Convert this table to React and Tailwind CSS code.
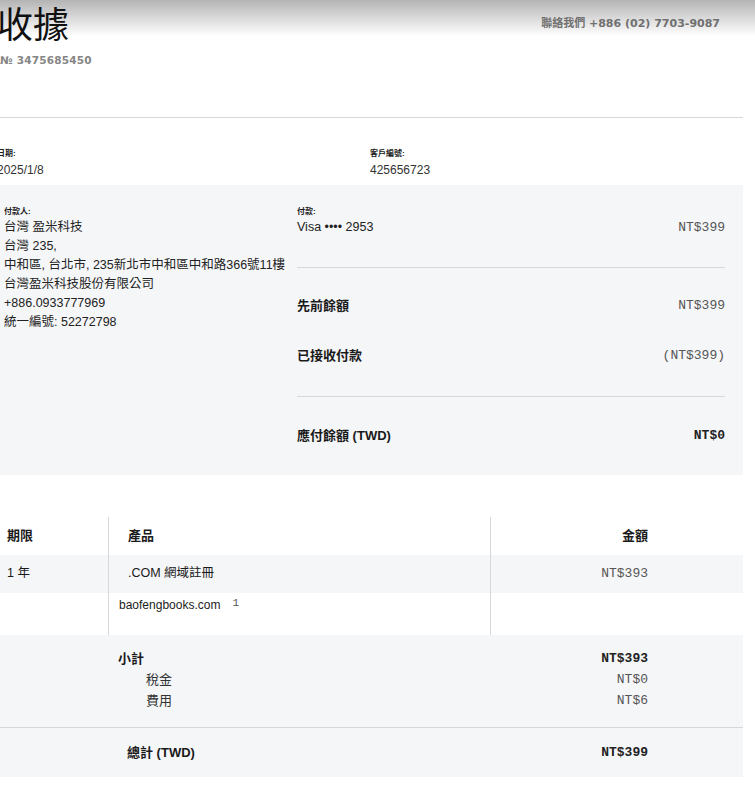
const cjk = { fontFamily: '"Liberation Sans", "Noto Sans CJK TC", sans-serif' };
const mono = { fontFamily: '"Liberation Mono", "Noto Sans CJK TC", monospace' };
const round = { fontFamily: '"DejaVu Sans", "Noto Sans CJK TC", sans-serif' };

function Money({ children, bold }) {
  return (
    <span className={`text-[13px] ${bold ? 'font-bold text-[#222]' : 'text-[#555]'}`} style={mono}>
      {children}
    </span>
  );
}

export default function App() {
  return (
    <div className="w-[755px] min-h-[799px] bg-white text-[#1a1a1a]" style={cjk}>
      <header className="bg-[linear-gradient(to_bottom,#b4b4b4_0px,#ffffff_36px)]">
        <div className="flex justify-between items-start">
          <div>
            <h1 className="text-[36px] leading-[44px] pt-[4px] -ml-[3px] font-normal text-[#111]">收據</h1>
            <div className="mt-[5px] text-[10.5px] font-semibold text-[#858585] tracking-[0.2px]" style={round}>
              № 3475685450
            </div>
          </div>
          <div className="pt-[16px] pr-[35px] text-[11px] font-semibold text-[#707070]" style={round}>
            聯絡我們 +886 (02) 7703-9087
          </div>
        </div>
      </header>

      <div className="w-[743px] mt-[48px] border-t border-[#d6d6d6]" />

      <section className="w-[743px] grid grid-cols-[370px_1fr] pt-[28px] pb-[6px] -ml-[3px]">
        <div>
          <div className="text-[8px] font-bold leading-[15px]">日期:</div>
          <div className="text-[12px] leading-[18px] text-[#333]">2025/1/8</div>
        </div>
        <div className="pl-[3px]">
          <div className="text-[8px] font-bold leading-[15px]">客戶編號:</div>
          <div className="text-[12px] leading-[18px] text-[#333]">425656723</div>
        </div>
      </section>

      <section className="w-[743px] h-[290px] bg-[#f5f6f8] flex pt-[20px]">
        <div className="w-[297px] pl-[4px]">
          <div className="text-[8px] font-bold leading-[13px]">付款人:</div>
          <div className="text-[12.5px] leading-[19px] text-[#222] whitespace-nowrap">
            <div>台灣 盈米科技</div>
            <div>台灣 235,</div>
            <div>中和區, 台北市, 235新北市中和區中和路366號11樓</div>
            <div>台灣盈米科技股份有限公司</div>
            <div>+886.0933777969</div>
            <div>統一編號: 52272798</div>
          </div>
        </div>
        <div className="flex-1 pr-[18px] flex flex-col">
          <div className="text-[8px] font-bold leading-[13px]">付款:</div>
          <div className="flex justify-between items-center h-[19px]">
            <span className="text-[12.5px] text-[#222]">Visa •••• 2953</span>
            <Money>NT$399</Money>
          </div>
          <div className="mt-[30px] border-t border-[#d8d8d8]" />
          <div className="flex justify-between items-center h-[20px] mt-[28px]">
            <span className="text-[13px] font-bold">先前餘額</span>
            <Money>NT$399</Money>
          </div>
          <div className="flex justify-between items-center h-[20px] mt-[30px]">
            <span className="text-[13px] font-bold">已接收付款</span>
            <Money>(NT$399)</Money>
          </div>
          <div className="mt-[30px] border-t border-[#d8d8d8]" />
          <div className="flex justify-between items-center h-[20px] mt-[29px]">
            <span className="text-[13px] font-bold">應付餘額 (TWD)</span>
            <Money bold>NT$0</Money>
          </div>
        </div>
      </section>

      <section className="w-[743px] mt-[42px] grid grid-cols-[108px_382px_1fr]">
        <div className="h-[38px] flex items-center pl-[7px] text-[13px] font-bold">期限</div>
        <div className="h-[38px] flex items-center pl-[19px] text-[13px] font-bold border-l border-[#d8d8d8]">產品</div>
        <div className="h-[38px] flex items-center justify-end pr-[95px] text-[13px] font-bold border-l border-[#d8d8d8]">金額</div>

        <div className="h-[38px] flex items-center pl-[7px] text-[12.5px] bg-[#f5f6f8]">1 年</div>
        <div className="h-[38px] flex items-center pl-[19px] text-[12.5px] bg-[#f5f6f8] border-l border-[#d8d8d8]">.COM 網域註冊</div>
        <div className="h-[38px] flex items-center justify-end pr-[95px] bg-[#f5f6f8] border-l border-[#d8d8d8]">
          <Money>NT$393</Money>
        </div>

        <div className="h-[42px]" />
        <div className="h-[42px] pl-[10px] pt-[3px] border-l border-[#d8d8d8] text-[12px] text-[#222]">
          baofengbooks.com
          <sup className="ml-[12px] text-[11px] text-[#555] relative -top-[3px]" style={mono}>1</sup>
        </div>
        <div className="h-[42px] border-l border-[#d8d8d8]" />
      </section>

      <section className="w-[743px] bg-[#f5f6f8]">
        <div className="flex pt-[13px] pb-[16px] pr-[95px]">
          <div className="flex-1 pl-[118px] leading-[21px]">
            <div className="text-[13px] font-bold">小計</div>
            <div className="pl-[28px] text-[13px] text-[#333]">稅金</div>
            <div className="pl-[28px] text-[13px] text-[#333]">費用</div>
          </div>
          <div className="flex flex-col items-end leading-[21px]">
            <Money bold>NT$393</Money>
            <Money>NT$0</Money>
            <Money>NT$6</Money>
          </div>
        </div>
        <div className="border-t border-[#d8d8d8]" />
        <div className="flex justify-between items-center h-[49px] pl-[127px] pr-[95px]">
          <span className="text-[13px] font-bold">總計 (TWD)</span>
          <Money bold>NT$399</Money>
        </div>
      </section>
    </div>
  );
}
